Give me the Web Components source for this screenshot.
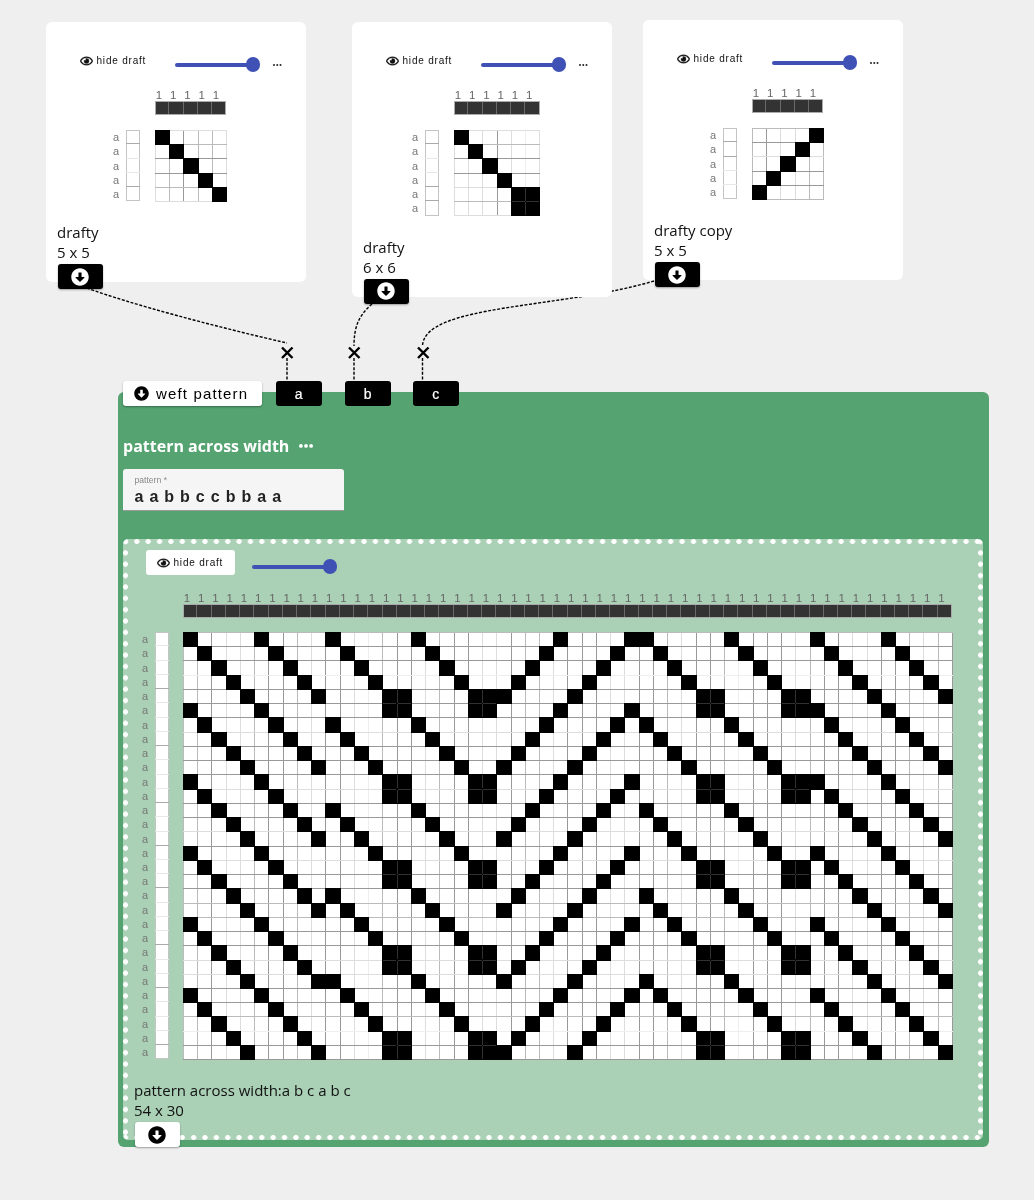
<!DOCTYPE html>
<html lang="en">
  <head>
    <meta charset="UTF-8" />
    <meta name="viewport" content="width=device-width, initial-scale=1.0" />
    <title>weft pattern</title>
    <style>
      html, body { margin: 0; background: #efefef; }
    </style>
    <script type="module">
      const CELL = 14.24;
      const LINE_COLORS = { S: "#999", M: "#bbb", L: "#ddd", V: "#eee" };

      const ICON_DOWN = `<svg viewBox="0 0 512 512" fill="currentColor"><path d="M504 256c0 137-111 248-248 248S8 393 8 256 119 8 256 8s248 111 248 248zM212 140v116h-70.9c-10.7 0-16.1 13-8.5 20.5l114.9 114.3c4.7 4.7 12.2 4.7 16.9 0l114.9-114.3c7.6-7.6 2.2-20.5-8.5-20.5H300V140c0-6.6-5.4-12-12-12h-64c-6.6 0-12 5.4-12 12z"/></svg>`;
      const ICON_EYE = `<svg viewBox="0 0 576 512" fill="currentColor" stroke="currentColor" stroke-width="14"><path d="M288 144a110.94 110.94 0 0 0-31.24 5 55.4 55.4 0 0 1 7.24 27 56 56 0 0 1-56 56 55.4 55.4 0 0 1-27-7.24A111.71 111.71 0 1 0 288 144zm284.52 97.4C518.29 135.59 410.93 64 288 64S57.68 135.64 3.48 241.41a32.35 32.35 0 0 0 0 29.19C57.71 376.41 165.07 448 288 448s230.32-71.64 284.52-177.41a32.35 32.35 0 0 0 0-29.19zM288 400c-98.65 0-189.09-55-237.93-144C98.91 167 189.34 112 288 112s189.09 55 237.93 144C477.1 345 386.66 400 288 400z"/></svg>`;
      const dots = (w, r) => `<svg width="${w}" height="${r * 2}" viewBox="0 0 ${w} ${r * 2}" fill="currentColor" style="display:block"><circle cx="${r}" cy="${r}" r="${r}"/><circle cx="${w / 2}" cy="${r}" r="${r}"/><circle cx="${w - r}" cy="${r}" r="${r}"/></svg>`;

      // the three source tiles, true = black
      const TILES = {
        a: Array.from({ length: 5 }, (_, r) => Array.from({ length: 5 }, (_, c) => r === c)),
        b: Array.from({ length: 6 }, (_, r) =>
          Array.from({ length: 6 }, (_, c) => r === c || (r >= 4 && c >= 4))
        ),
        c: Array.from({ length: 5 }, (_, r) => Array.from({ length: 5 }, (_, c) => r + c === 4)),
      };

      class DraftCells extends HTMLElement {
        constructor() {
          super();
          this.attachShadow({ mode: "open" }).innerHTML = `
            <style>
              :host { display: block; line-height: 0; }
              canvas { display: block; }
            </style>
            <canvas></canvas>`;
        }

        connectedCallback() {
          const tiles = this.getAttribute("pattern").split(" ").map((t) => TILES[t]);
          const rows = Number(this.getAttribute("rows"));
          const vl = this.getAttribute("vl");
          const hl = this.getAttribute("hl");
          const cols = tiles.reduce((n, t) => n + t[0].length, 0);
          const canvas = this.shadowRoot.querySelector("canvas");
          canvas.width = Math.round(cols * CELL) + 1;
          canvas.height = Math.round(rows * CELL) + 1;
          const ctx = canvas.getContext("2d");
          ctx.fillStyle = "#fff";
          ctx.fillRect(0, 0, canvas.width, canvas.height);

          for (let k = 0; k <= cols; k++) {
            ctx.fillStyle = LINE_COLORS[vl[k] || "S"];
            ctx.fillRect(Math.round(k * CELL), 0, 1, canvas.height);
          }
          for (let k = 0; k <= rows; k++) {
            ctx.fillStyle = LINE_COLORS[hl[k] || "S"];
            ctx.fillRect(0, Math.round(k * CELL), canvas.width, 1);
          }

          let x = 0;
          ctx.fillStyle = "#000";
          tiles.forEach((tile) => {
            const h = tile.length;
            const w = tile[0].length;
            for (let r = 0; r < rows; r++) {
              for (let c = 0; c < w; c++) {
                if (!tile[r % h][c]) continue;
                const x0 = Math.round((x + c) * CELL);
                const y0 = Math.round(r * CELL);
                const x1 = Math.round((x + c + 1) * CELL);
                const y1 = Math.round((r + 1) * CELL);
                ctx.fillRect(x0, y0, x1 - x0 + 1, y1 - y0 + 1);
              }
            }
            x += w;
          });
          // seams between neighbouring black cells stay faintly visible
          ctx.fillStyle = "rgba(90,90,90,.55)";
          x = 0;
          tiles.forEach((tile) => {
            const w = tile[0].length;
            for (let r = 0; r < rows; r++) {
              for (let c = 0; c < w; c++) {
                if (!tile[r % tile.length][c]) continue;
                if (c + 1 < w && tile[r % tile.length][c + 1]) {
                  ctx.fillRect(Math.round((x + c + 1) * CELL), Math.round(r * CELL) + 1, 1, 13);
                }
                if (tile[(r + 1) % tile.length][c] && r + 1 < rows) {
                  ctx.fillRect(Math.round((x + c) * CELL) + 1, Math.round((r + 1) * CELL), 13, 1);
                }
              }
            }
            x += w;
          });
        }
      }

      class DraftGrid extends HTMLElement {
        constructor() {
          super();
          this.attachShadow({ mode: "open" });
        }

        connectedCallback() {
          const pattern = this.getAttribute("pattern");
          const rows = Number(this.getAttribute("rows"));
          const cols = pattern.split(" ").reduce((n, t) => n + TILES[t][0].length, 0);
          const darkRows = (this.getAttribute("boxdark") || "").split(",").map(Number);
          const nums = Array.from({ length: cols }, () => `<span class="num">1</span>`).join("");
          const bars = Array.from({ length: cols }, () => `<span class="warp"></span>`).join("");
          const labels = Array.from({ length: rows }, () => `<span class="lab">a</span>`).join("");
          const boxes = Array.from({ length: rows }, (_, i) =>
            `<span class="box${darkRows.includes(i) ? " dark" : ""}"></span>`
          ).join("");
          const w = cols * CELL;
          const h = rows * CELL;
          this.shadowRoot.innerHTML = `
            <style>
              :host {
                display: grid;
                grid-template-columns: 13px ${CELL}px var(--grid-gap, 15px) ${w + 1}px;
                grid-template-rows: 11px ${CELL}px var(--grid-row-gap, 15px) ${h}px;
                width: max-content;
                font-family: "Liberation Sans", Arial, sans-serif;
                will-change: transform;
              }
              .nums { grid-area: 1 / 4; display: flex; }
              .num {
                flex: 0 0 ${CELL}px;
                font-size: 11.5px;
                line-height: 11px;
                color: #666;
                padding-left: 0.5px;
                box-sizing: border-box;
              }
              .bars { grid-area: 2 / 4; display: flex; width: ${w}px; outline: 1px solid #aaa; outline-offset: -1px; }
              .warp { flex: 1; background: #333; border-right: 1px solid #6a6a6a; box-sizing: border-box; }
              .labs { grid-area: 4 / 1; display: flex; flex-direction: column; }
              .lab {
                height: ${CELL}px;
                font-size: 11px;
                line-height: ${CELL}px;
                color: #777;
              }
              .boxes {
                grid-area: 4 / 2;
                display: flex;
                flex-direction: column;
                background: #fff;
                height: ${h}px;
                box-shadow: inset 0 0 0 1px #c4c4c4;
              }
              .box { height: ${CELL}px; border-bottom: 1px solid #e8e8e8; box-sizing: border-box; }
              .box:last-child { border-bottom: 0; }
              .box.dark { border-bottom-color: #aaa; }
              draft-cells { grid-area: 4 / 4; }
            </style>
            <div class="nums">${nums}</div>
            <div class="bars">${bars}</div>
            <div class="labs">${labels}</div>
            <div class="boxes">${boxes}</div>
            <draft-cells pattern="${pattern}" rows="${rows}" vl="${this.getAttribute("vl")}" hl="${this.getAttribute("hl")}"></draft-cells>`;
        }
      }

      class HideToggle extends HTMLElement {
        constructor() {
          super();
          this.attachShadow({ mode: "open" }).innerHTML = `
            <style>
              :host {
                display: flex;
                align-items: center;
                gap: 3.5px;
                box-sizing: border-box;
                width: 89px;
                height: 25px;
                padding-left: 11px;
                border-radius: 3px;
                color: #111;
                background: var(--toggle-bg, transparent);
                font: 10px/1 "Liberation Sans", Arial, sans-serif;
                letter-spacing: 0.8px;
                white-space: nowrap;
                will-change: transform;
              }
              svg { width: 13px; height: 12px; flex: none; }
            </style>
            ${ICON_EYE}<slot></slot>`;
        }
      }

      class RangeSlider extends HTMLElement {
        constructor() {
          super();
          this.attachShadow({ mode: "open" }).innerHTML = `
            <style>
              :host { display: flex; align-items: center; width: 85px; height: 15px; }
              .track { flex: 1; height: 4px; border-radius: 2px 0 0 2px; background: #3f51b5; }
              .thumb { flex: none; width: 14.5px; height: 14.5px; margin-left: -7px; border-radius: 50%; background: #3f51b5; }
            </style>
            <div class="track"></div><div class="thumb"></div>`;
        }
      }

      class DraftView extends HTMLElement {
        constructor() {
          super();
          this.attachShadow({ mode: "open" });
        }

        connectedCallback() {
          const wide = this.hasAttribute("wide");
          const more = wide ? "" : `<span class="more">${dots(8.5, 1)}</span>`;
          const a = (n) => this.getAttribute(n) || "";
          this.shadowRoot.innerHTML = `
            <style>
              :host { display: block; }
              .toolbar { display: flex; align-items: flex-start; padding-left: 23px; }
              range-slider { margin: 9px 0 0 17px; }
              .more { margin: 16px 0 0 13px; color: #222; }
              .holder { display: flex; margin-top: ${wide ? 18 : 17}px; }
              .holder.center { justify-content: center; padding-right: 12px; }
              .holder.left { padding-left: 18.5px; --grid-gap: 14px; --grid-row-gap: 14px; }
              .title {
                margin: 21px 0 1.6px 11px;
                font: 15px/20.2px "Open Sans", sans-serif;
                color: #111;
                will-change: transform;
              }
              .title div { white-space: nowrap; }
              icon-button { margin: 0 0 -7px 11.5px; }
            </style>
            <div class="toolbar">
              <hide-toggle>hide draft</hide-toggle>
              <range-slider></range-slider>
              ${more}
            </div>
            <div class="holder ${wide ? "left" : "center"}">
              <draft-grid pattern="${a("pattern")}" rows="${a("rows")}" vl="${a("vl")}" hl="${a("hl")}" boxdark="${a("boxdark")}"></draft-grid>
            </div>
            <div class="title"><div>${a("name")}</div><div>${a("size")}</div></div>
            <icon-button ${wide ? "" : "dark"}></icon-button>`;
        }
      }

      class IconButton extends HTMLElement {
        constructor() {
          super();
          this.attachShadow({ mode: "open" }).innerHTML = `
            <style>
              :host {
                display: flex;
                align-items: center;
                justify-content: center;
                width: 45.5px;
                height: 25px;
                border-radius: 3px;
                color: #000;
                background: #fff;
                box-shadow: 0 1px 2px rgba(0,0,0,.35);
              }
              :host([dark]) { color: #fff; background: #000; }
              svg { width: 18px; height: 18px; display: block; }
            </style>
            ${ICON_DOWN}`;
        }
      }

      class DraftNode extends HTMLElement {
        constructor() {
          super();
          this.attachShadow({ mode: "open" }).innerHTML = `
            <style>
              :host {
                display: block;
                position: absolute;
                left: var(--x);
                top: var(--y);
                width: 260px;
                box-sizing: border-box;
                padding-top: 26px;
                border-radius: 6px;
                background: #fff;
              }
            </style>
            <slot></slot>`;
        }
      }

      class PortButton extends HTMLElement {
        constructor() {
          super();
          this.attachShadow({ mode: "open" }).innerHTML = `
            <style>
              :host {
                display: flex;
                align-items: center;
                justify-content: center;
                width: 45.5px;
                height: 25px;
                border-radius: 3px;
                color: #fff;
                background: #000;
                font: 14px/1 "Liberation Sans", Arial, sans-serif;
                -webkit-text-stroke: 0.2px #fff;
                will-change: transform;
              }
            </style>
            <slot></slot>`;
        }
      }

      class PatternNode extends HTMLElement {
        constructor() {
          super();
          this.attachShadow({ mode: "open" }).innerHTML = `
            <style>
              :host {
                display: block;
                position: absolute;
                left: var(--x);
                top: var(--y);
                width: 871px;
                box-sizing: border-box;
                padding: 0 6px 7px 5px;
                border-radius: 6px;
                background: #55a371;
              }
              .ports { display: flex; margin-top: -11px; }
              .weft {
                display: flex;
                align-items: center;
                gap: 7px;
                box-sizing: border-box;
                width: 139px;
                height: 25px;
                padding-left: 11px;
                margin-right: 14px;
                border-radius: 3px;
                background: #fff;
                color: #000;
                box-shadow: 0 1px 2px rgba(0,0,0,.35);
                font: 15px/1 "Liberation Sans", Arial, sans-serif;
                letter-spacing: 1.15px;
                white-space: nowrap;
                will-change: transform;
              }
              .weft svg { width: 15px; height: 15px; flex: none; }
              port-button + port-button { margin-left: 23px; }
              h2 {
                display: flex;
                align-items: center;
                gap: 10px;
                margin: 29px 0 0;
                color: #fff;
                font: 700 16px/22px "Open Sans", sans-serif;
                will-change: transform;
              }
              .field {
                box-sizing: border-box;
                width: 221px;
                height: 42px;
                margin-top: 12px;
                padding: 6px 11.5px 0;
                border-radius: 3px 3px 0 0;
                background: #f5f5f5;
                border-bottom: 1px solid #9a9a9a;
                font-family: "Liberation Sans", Arial, sans-serif;
                will-change: transform;
              }
              .field label { display: block; font-size: 8.6px; line-height: 10px; color: #888; }
              .field div { margin-top: 2px; font-size: 16px; line-height: 20px; font-weight: 700; letter-spacing: 0.78px; color: #222; white-space: nowrap; }
              .panel {
                margin-top: 28px;
                padding-top: 11px;
                height: 601px;
                box-sizing: border-box;
                border-radius: 5px;
                background-color: #aad0b6;
                background-image:
                  radial-gradient(circle at center, #fff 2.3px, transparent 2.9px),
                  radial-gradient(circle at center, #fff 2.3px, transparent 2.9px),
                  radial-gradient(circle at center, #fff 2.3px, transparent 2.9px),
                  radial-gradient(circle at center, #fff 2.3px, transparent 2.9px);
                background-size: 11.36px 5.4px, 11.36px 5.4px, 5.4px 11.36px, 5.4px 11.36px;
                background-repeat: repeat-x, repeat-x, repeat-y, repeat-y;
                background-position: -3.2px 0, -3.2px 100%, 0 -3.2px, 100% -3.2px;
              }
            </style>
            <div class="ports">
              <div class="weft">${ICON_DOWN}weft pattern</div>
              <port-button>a</port-button>
              <port-button>b</port-button>
              <port-button>c</port-button>
            </div>
            <h2>pattern across width <span>${dots(14, 1.9)}</span></h2>
            <div class="field"><label>pattern *</label><div>a a b b c c b b a a</div></div>
            <div class="panel"><slot></slot></div>`;
        }
      }

      class LoomCanvas extends HTMLElement {
        constructor() {
          super();
          this.attachShadow({ mode: "open" }).innerHTML = `
            <style>
              :host { display: block; position: relative; width: 1034px; height: 1200px; background: #efefef; overflow: hidden; }
              svg { position: absolute; inset: 0; }
              .wires path { fill: none; stroke: #000; stroke-width: 1.4; stroke-dasharray: 3 1.6; }
              .marks path { fill: none; stroke: #000; stroke-width: 2.4; }
            </style>
            <svg class="wires" width="1034" height="1200">
              <path d="M87 288 C130 304 217 327 287 343" />
              <path d="M372 304 C358 316 354 328 354 346" />
              <path d="M654 281 C560 309 424 304 422.5 346" />
              <path d="M287 358 V381" />
              <path d="M354 358 V381" />
              <path d="M422.5 358 V381" />
            </svg>
            <slot></slot>
            <svg class="marks" width="1034" height="1200">
              <path d="M282 347.5 L292.5 358 M292.5 347.5 L282 358" />
              <path d="M349 347.5 L359.5 358 M359.5 347.5 L349 358" />
              <path d="M418 347.5 L428.5 358 M428.5 347.5 L418 358" />
            </svg>`;
        }
      }

      customElements.define("draft-cells", DraftCells);
      customElements.define("draft-grid", DraftGrid);
      customElements.define("hide-toggle", HideToggle);
      customElements.define("range-slider", RangeSlider);
      customElements.define("icon-button", IconButton);
      customElements.define("draft-view", DraftView);
      customElements.define("draft-node", DraftNode);
      customElements.define("port-button", PortButton);
      customElements.define("pattern-node", PatternNode);
      customElements.define("loom-canvas", LoomCanvas);
    </script>
  </head>
  <body>
    <loom-canvas>
      <draft-node style="--x: 46px; --y: 22px">
        <draft-view name="drafty" size="5 x 5" pattern="a" rows="5" vl="LMSMML" hl="LMSSML" boxdark="0,3"></draft-view>
      </draft-node>
      <draft-node style="--x: 352px; --y: 22px">
        <draft-view name="drafty" size="6 x 6" pattern="b" rows="6" vl="LLLSLVL" hl="LMSSLML" boxdark="0,3,4"></draft-view>
      </draft-node>
      <draft-node style="--x: 643px; --y: 20px">
        <draft-view name="drafty copy" size="5 x 5" pattern="c" rows="5" vl="MSLLMM" hl="MSLSSM" boxdark="0,1"></draft-view>
      </draft-node>
      <pattern-node style="--x: 118px; --y: 392px">
        <draft-view
          wide
          style="--toggle-bg: #fff"
          name="pattern across width:a b c a b c"
          size="54 x 30"
          pattern="a a b b c c b b a a"
          rows="30"
          vl="MMSLLMSSMLSSLVMSSLMSSLLSMMLSSSLLSSMLSSMVSSSLMSSLLSSMLMS"
          hl="MSSVSSSLSSSLSSLSLSSMMSSLLSSMVSS"
          boxdark="3,7,11,14,17,21,24,28"
        ></draft-view>
      </pattern-node>
    </loom-canvas>
  </body>
</html>
